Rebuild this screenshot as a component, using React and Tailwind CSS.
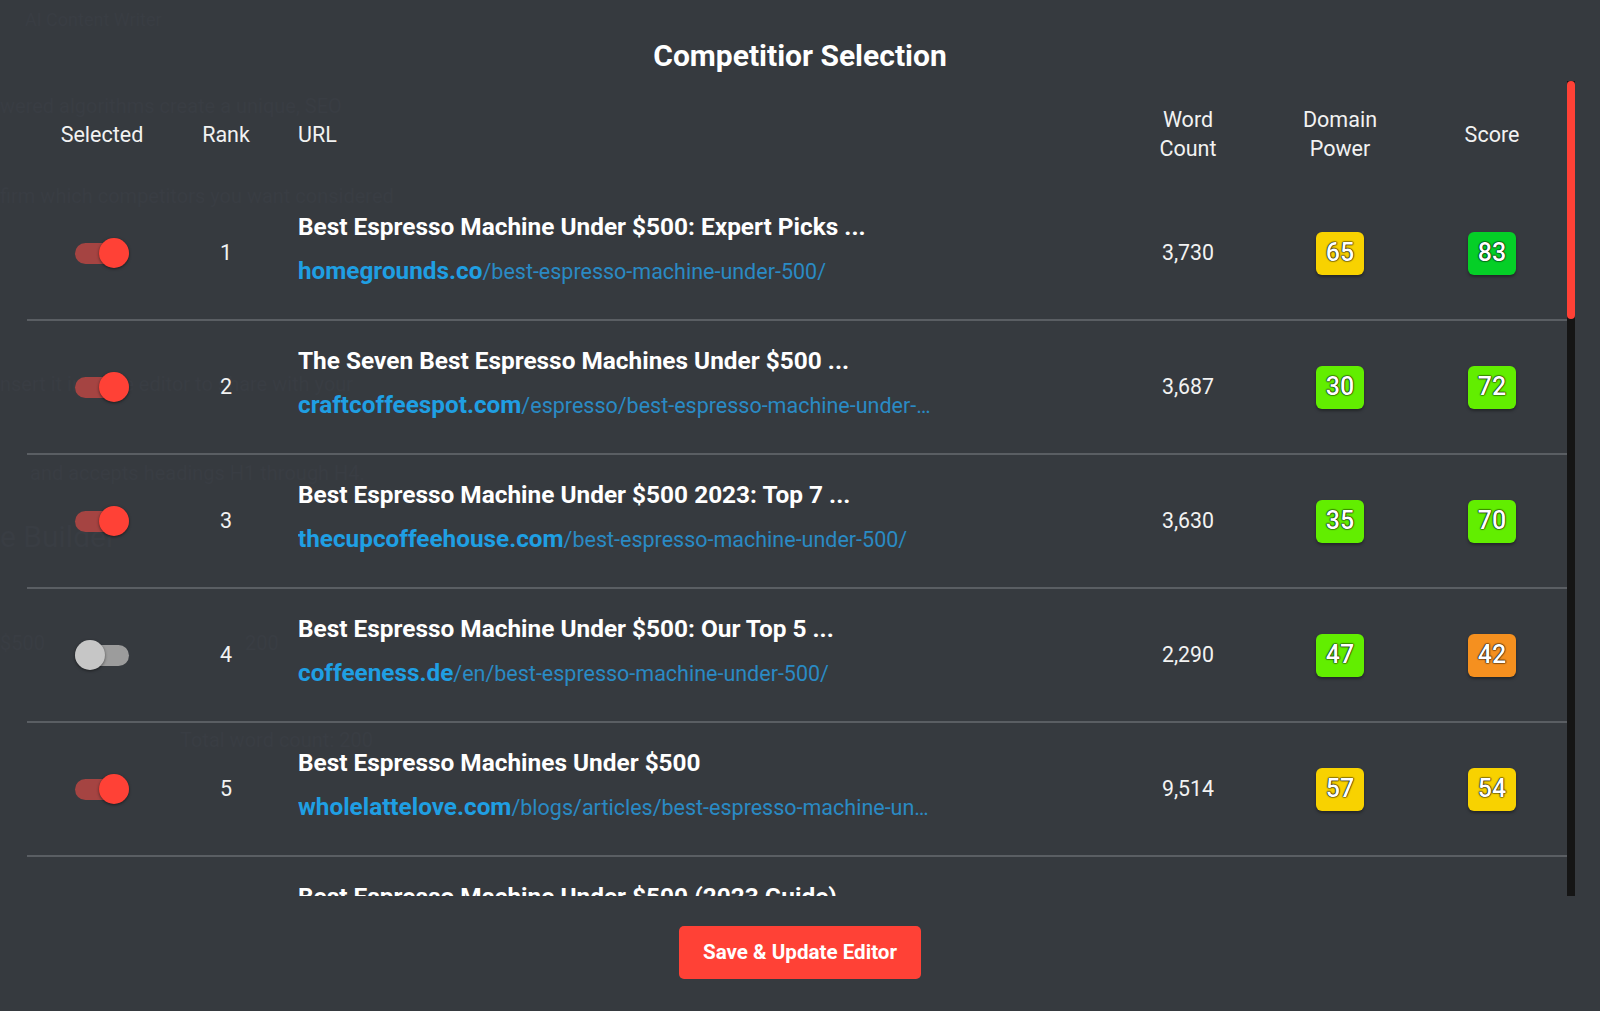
import React from "react";

const rows = [
  {
    on: true,
    rank: 1,
    title: "Best Espresso Machine Under $500: Expert Picks ...",
    domain: "homegrounds.co",
    path: "/best-espresso-machine-under-500/",
    words: "3,730",
    dp: 65,
    dpColor: "bg-[#f8d200]",
    score: 83,
    scoreColor: "bg-[#05cf27]",
  },
  {
    on: true,
    rank: 2,
    title: "The Seven Best Espresso Machines Under $500 ...",
    domain: "craftcoffeespot.com",
    path: "/espresso/best-espresso-machine-under-500-reviews/",
    words: "3,687",
    dp: 30,
    dpColor: "bg-[#62ee00]",
    score: 72,
    scoreColor: "bg-[#62ee00]",
  },
  {
    on: true,
    rank: 3,
    title: "Best Espresso Machine Under $500 2023: Top 7 ...",
    domain: "thecupcoffeehouse.com",
    path: "/best-espresso-machine-under-500/",
    words: "3,630",
    dp: 35,
    dpColor: "bg-[#62ee00]",
    score: 70,
    scoreColor: "bg-[#62ee00]",
  },
  {
    on: false,
    rank: 4,
    title: "Best Espresso Machine Under $500: Our Top 5 ...",
    domain: "coffeeness.de",
    path: "/en/best-espresso-machine-under-500/",
    words: "2,290",
    dp: 47,
    dpColor: "bg-[#62ee00]",
    score: 42,
    scoreColor: "bg-[#f5901f]",
  },
  {
    on: true,
    rank: 5,
    title: "Best Espresso Machines Under $500",
    domain: "wholelattelove.com",
    path: "/blogs/articles/best-espresso-machine-under-500",
    words: "9,514",
    dp: 57,
    dpColor: "bg-[#f8d200]",
    score: 54,
    scoreColor: "bg-[#f8d200]",
  },
  {
    on: true,
    rank: 6,
    title: "Best Espresso Machine Under $500 (2023 Guide)",
    domain: "coffeeaffection.com",
    path: "/best-espresso-machine-under-500/",
    words: "4,102",
    dp: 52,
    dpColor: "bg-[#f8d200]",
    score: 61,
    scoreColor: "bg-[#62ee00]",
  },
];

function Toggle({ on }) {
  return (
    <div className="relative w-[54px] h-[30px] flex items-center">
      <div
        className={
          "w-[54px] h-[21px] rounded-full " +
          (on ? "bg-[#a54442]" : "bg-[#9c9c9c]")
        }
      />
      <div
        className={
          "absolute top-0 w-[30px] h-[30px] rounded-full shadow-[0_1px_3px_rgba(0,0,0,0.5)] " +
          (on ? "right-0 bg-[#ff4136]" : "left-0 bg-[#c6c6c6]")
        }
      />
    </div>
  );
}

function Badge({ value, color }) {
  return (
    <div
      className={
        "w-[48px] h-[43px] rounded-[6px] flex items-center justify-center text-[25px] font-medium text-white shadow-[0_2px_3px_rgba(0,0,0,0.35)] [text-shadow:0_0_2px_#000,0_0_1px_#000,0_0_1px_#000] " +
        color
      }
    >
      {value}
    </div>
  );
}

function Row({ r }) {
  return (
    <div className="grid grid-cols-[150px_98px_838px_150px_154px_150px] h-[134px] shrink-0 border-b-2 border-[#5a5e63]">
      <div className="flex items-center justify-center">
        <Toggle on={r.on} />
      </div>
      <div className="flex items-center justify-center text-[21.5px] text-[#f2f2f2]">
        {r.rank}
      </div>
      <div className="pl-[23px] pt-[22px] flex flex-col items-start min-w-0">
        <div className="text-[24.4px] leading-[36px] font-bold text-white whitespace-nowrap">
          {r.title}
        </div>
        <div className="mt-[10px] leading-[32px] max-w-[636px] truncate text-[#2a8ac4] text-[21.5px]">
          <span className="text-[24.3px] font-bold text-[#1f9fe3]">{r.domain}</span>
          {r.path}
        </div>
      </div>
      <div className="flex items-center justify-center text-[21.3px] text-[#f2f2f2]">
        {r.words}
      </div>
      <div className="flex items-center justify-center">
        <Badge value={r.dp} color={r.dpColor} />
      </div>
      <div className="flex items-center justify-center">
        <Badge value={r.score} color={r.scoreColor} />
      </div>
    </div>
  );
}

export default function App() {
  return (
    <div className="relative w-[1600px] h-[1011px] overflow-hidden bg-[#363a3f] font-[Roboto,sans-serif]">
      {/* faint page behind the dialog */}
      <div className="flex flex-col text-[#393d43] text-[20px] leading-[28px] select-none">
        <div className="pl-[25px] pt-[6px] text-[18px]">AI Content Writer</div>
        <div className="mt-[58px]">wered algorithms create a unique, SEO</div>
        <div className="mt-[62px]">firm which competitors you want considered</div>
        <div className="mt-[160px]">nsert it into the editor to share with your</div>
        <div className="mt-[61px] pl-[30px]">and accepts headings H1 through H4.</div>
        <div className="mt-[30px] text-[30px] leading-[40px]">e Builder</div>
        <div className="mt-[72px] flex gap-[200px]"><span>$500</span><span>200</span></div>
        <div className="mt-[69px] pl-[180px]">Total word count: 200</div>
      </div>

      {/* dialog */}
      <div className="absolute inset-0 flex flex-col">
        <div className="pt-[38px] h-[81px] text-center text-[30px] leading-[36px] font-bold text-white">
          Competitior Selection
        </div>
        <div className="flex h-[815px] pl-[27px] pr-[25px]">
          <div className="w-[1540px] h-full overflow-hidden flex flex-col">
            <div className="grid grid-cols-[150px_98px_838px_150px_154px_150px] h-[106px] shrink-0 text-[21.5px] leading-[29px] text-[#f2f2f2]">
              <div className="flex items-center justify-center">Selected</div>
              <div className="flex items-center justify-center">Rank</div>
              <div className="flex items-center pl-[23px]">URL</div>
              <div className="flex items-center justify-center text-center">
                Word
                <br />
                Count
              </div>
              <div className="flex items-center justify-center text-center">
                Domain
                <br />
                Power
              </div>
              <div className="flex items-center justify-center">Score</div>
            </div>
            {rows.map((r) => (
              <Row key={r.rank} r={r} />
            ))}
          </div>
          <div className="w-[8px] h-full bg-[#151515]">
            <div className="w-[8px] h-[238px] rounded-full bg-[#ff4136]" />
          </div>
        </div>
        <div className="flex justify-center pt-[30px]">
          <button className="w-[242px] h-[53px] rounded-[5px] bg-[#ff4136] text-white text-[20.6px] font-bold">
            Save &amp; Update Editor
          </button>
        </div>
      </div>
    </div>
  );
}
